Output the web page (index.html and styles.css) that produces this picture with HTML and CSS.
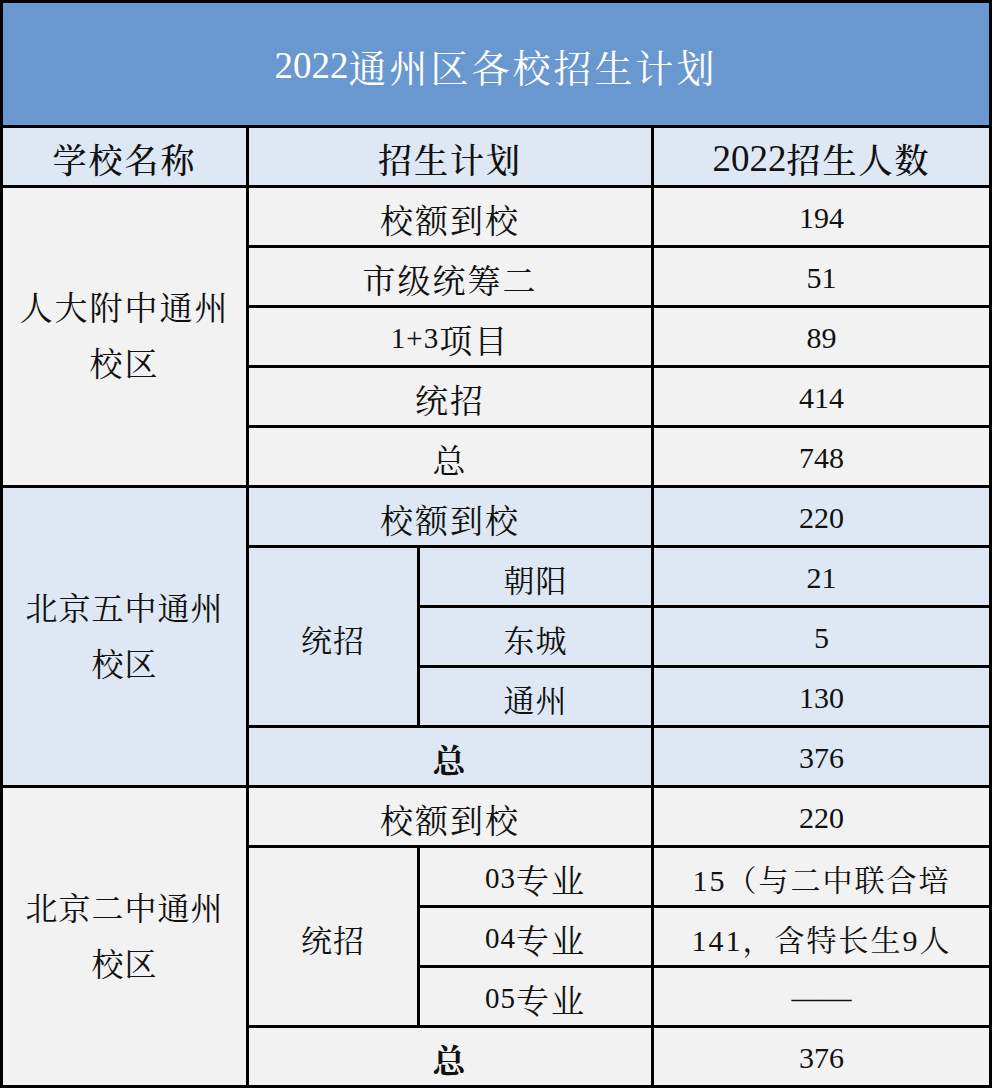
FILE: index.html
```html
<!DOCTYPE html>
<html lang="zh-CN">
<head>
<meta charset="utf-8">
<title>2022通州区各校招生计划</title>
<link rel="stylesheet" href="styles.css">
</head>
<body>
<div class="sheet">
  <div class="cell title"><span class="num">2022</span>通州区各校招生计划</div>

  <div class="cell head">学校名称</div>
  <div class="cell head span2">招生计划</div>
  <div class="cell head"><span class="num">2022</span>招生人数</div>

  <div class="cell g school rs5">人大附中通州<br>校区</div>
  <div class="cell g span2">校额到校</div>
  <div class="cell g val">194</div>
  <div class="cell g span2">市级统筹二</div>
  <div class="cell g val">51</div>
  <div class="cell g span2"><span class="small">1+3</span>项目</div>
  <div class="cell g val">89</div>
  <div class="cell g span2">统招</div>
  <div class="cell g val">414</div>
  <div class="cell g span2">总</div>
  <div class="cell g val">748</div>

  <div class="cell b school rs5 narrow">北京五中通州<br>校区</div>
  <div class="cell b span2">校额到校</div>
  <div class="cell b val">220</div>
  <div class="cell b rs3 sub">统招</div>
  <div class="cell b sub">朝阳</div>
  <div class="cell b val">21</div>
  <div class="cell b sub">东城</div>
  <div class="cell b val">5</div>
  <div class="cell b sub">通州</div>
  <div class="cell b val">130</div>
  <div class="cell b span2 bold">总</div>
  <div class="cell b val">376</div>

  <div class="cell g school rs5 narrow">北京二中通州<br>校区</div>
  <div class="cell g span2">校额到校</div>
  <div class="cell g val">220</div>
  <div class="cell g rs3 sub">统招</div>
  <div class="cell g"><span class="small">03</span>专业</div>
  <div class="cell g val mixed">15（与二中联合培</div>
  <div class="cell g"><span class="small">04</span>专业</div>
  <div class="cell g val mixed">141，含特长生9人</div>
  <div class="cell g"><span class="small">05</span>专业</div>
  <div class="cell g val">——</div>
  <div class="cell g span2 bold">总</div>
  <div class="cell g val">376</div>
</div>
</body>
</html>
```

FILE: styles.css
```css
html, body {
  margin: 0;
  padding: 0;
  background: #000;
}

.sheet {
  width: 992px;
  height: 1088px;
  box-sizing: border-box;
  display: grid;
  grid-template-columns: 243px 168px 231px 335px;
  grid-template-rows: 122px 57px repeat(15, 57px);
  gap: 3px;
  padding: 3px;
  background: #000;
  font-family: "Liberation Serif", "Noto Serif CJK SC", "Noto Sans CJK SC", serif;
  color: #111;
}

.cell {
  display: flex;
  align-items: center;
  justify-content: center;
  text-align: center;
  overflow: hidden;
  white-space: nowrap;
  font-size: 33px;
  letter-spacing: 2px;
  padding-top: 3px;
  box-sizing: border-box;
}

.title {
  grid-column: 1 / -1;
  background: #6898cf;
  color: #fff;
  font-size: 38px;
  letter-spacing: 3px;
  padding-top: 2px;
}

.title .num,
.head .num {
  font-size: 37px;
  letter-spacing: 0;
  font-weight: 400;
}

.head {
  background: #dde8f4;
  font-size: 34px;
  letter-spacing: 2px;
  font-weight: 500;
}

.g { background: #f2f2f2; }
.b { background: #dde8f4; }

.span2 { grid-column: span 2; }
.rs5 { grid-row: span 5; }
.rs3 { grid-row: span 3; }

.school {
  line-height: 56px;
  font-size: 33px;
  letter-spacing: 2px;
  padding-top: 0;
}

.school.narrow {
  font-size: 32px;
  letter-spacing: 1px;
}

.sub {
  font-size: 31px;
  letter-spacing: 1px;
}

.val {
  font-size: 30px;
  letter-spacing: 0;
}

.val.mixed {
  letter-spacing: 2px;
}

.small {
  font-size: 29px;
  letter-spacing: 1px;
}

.bold {
  font-weight: 700;
}
```
